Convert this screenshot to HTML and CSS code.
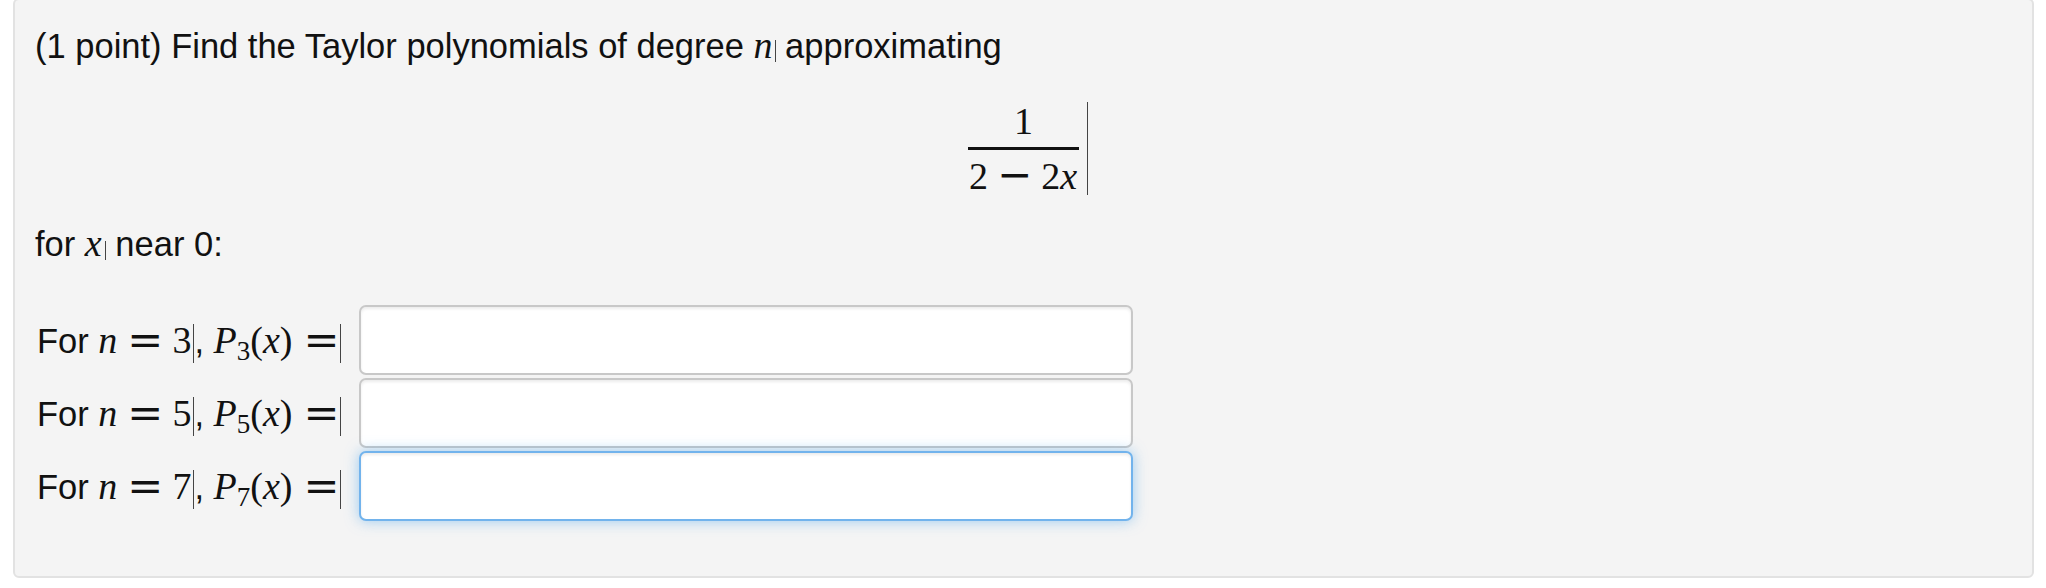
FILE: index.html
```html
<!DOCTYPE html>
<html>
<head>
<meta charset="utf-8">
<link rel="stylesheet" href="styles.css">
</head>
<body>
<div class="problem">
  <p class="line line-first">(1 point) Find the Taylor polynomials of degree <span class="math"><i>n</i></span><span class="caret caret-n"></span> approximating</p>
  <div class="display">
    <span class="frac">
      <span class="num">1</span>
      <span class="den">2<span class="op">−</span>2<i>x</i></span>
    </span>
    <span class="caret caret-frac"></span>
  </div>
  <p class="line line-for">for <span class="math"><i>x</i></span><span class="caret caret-x"></span> near 0:</p>
  <div class="rows">
    <div class="row">
      <span class="label">For <span class="math"><i>n</i><span class="eq">=</span>3</span><span class="caret caret-row"></span>, <span class="math"><i>P</i><sub>3</sub>(<i>x</i>)<span class="eq eq-end">=</span></span><span class="caret caret-row caret-end"></span></span>
      <input class="answer" type="text">
    </div>
    <div class="row">
      <span class="label">For <span class="math"><i>n</i><span class="eq">=</span>5</span><span class="caret caret-row"></span>, <span class="math"><i>P</i><sub>5</sub>(<i>x</i>)<span class="eq eq-end">=</span></span><span class="caret caret-row caret-end"></span></span>
      <input class="answer" type="text">
    </div>
    <div class="row">
      <span class="label">For <span class="math"><i>n</i><span class="eq">=</span>7</span><span class="caret caret-row"></span>, <span class="math"><i>P</i><sub>7</sub>(<i>x</i>)<span class="eq eq-end">=</span></span><span class="caret caret-row caret-end"></span></span>
      <input class="answer answer-focus" type="text">
    </div>
  </div>
</div>
</body>
</html>
```

FILE: styles.css
```css
html, body {
  margin: 0;
  padding: 0;
  background: #ffffff;
}

body {
  font-family: "Liberation Sans", Arial, Helvetica, sans-serif;
  font-size: 34.5px;
  color: #111111;
}

.problem {
  margin: -2px 12px 0 13px;
  border: 2px solid #e2e2e2;
  border-radius: 6px;
  background: #f4f4f4;
  padding: 23px 20px 55px 20px;
}

.line {
  margin: 0;
  line-height: 44px;
  white-space: nowrap;
}

.math {
  font-family: "Liberation Serif", "Times New Roman", serif;
  font-size: 38px;
}

.math i, .den i {
  font-style: italic;
}

.caret {
  display: inline-block;
  width: 1px;
  background: #444444;
}

.caret-n {
  height: 22px;
  vertical-align: -4px;
  margin-left: 2px;
}

.caret-x {
  height: 19px;
  vertical-align: -4px;
  margin-left: 3px;
}

.display {
  margin-top: 34px;
  display: flex;
  justify-content: center;
  align-items: stretch;
  padding-left: 9px;
  font-family: "Liberation Serif", "Times New Roman", serif;
  font-size: 38px;
}

.frac {
  display: inline-flex;
  flex-direction: column;
  align-items: stretch;
  text-align: center;
}

.num {
  line-height: 38px;
  padding-bottom: 7px;
  border-bottom: 3px solid #111111;
}

.den {
  line-height: 38px;
  padding: 7px 2px 0 1px;
}

.op {
  font-family: "DejaVu Serif", serif;
  font-size: 42px;
  line-height: 0;
  margin: 0 9px 0 9px;
}

.caret-frac {
  margin-left: 8px;
  align-self: stretch;
}

.line-for {
  margin-top: 26px;
}

.rows {
  margin-top: 39px;
  display: flex;
  flex-direction: column;
  gap: 3px;
}

.row {
  display: flex;
  align-items: center;
  height: 70px;
}

.label {
  white-space: nowrap;
  width: 322px;
  flex: none;
  margin-left: 2px;
}

.label .math {
  line-height: 44px;
}

.eq {
  font-family: "DejaVu Serif", serif;
  font-size: 43px;
  line-height: 0;
  vertical-align: -2px;
  margin: 0 9px 0 10px;
}

.eq-end {
  margin: 0 0 0 11px;
}

sub {
  font-size: 27px;
  vertical-align: -7px;
  line-height: 0;
}

.caret-row {
  height: 39px;
  vertical-align: -10px;
  margin-left: 2px;
}

.caret-end {
  margin-left: 1px;
}

.answer {
  box-sizing: border-box;
  flex: none;
  width: 774px;
  height: 70px;
  margin: 0;
  border: 2px solid #c8c8c8;
  border-radius: 7px;
  background: #ffffff;
  box-shadow: inset 0 2px 3px rgba(0, 0, 0, 0.08);
  outline: none;
}

.answer-focus {
  border-color: #72b3ec;
  box-shadow: inset 0 2px 3px rgba(0, 0, 0, 0.08), 0 0 14px rgba(82, 168, 236, 0.55);
}
```
